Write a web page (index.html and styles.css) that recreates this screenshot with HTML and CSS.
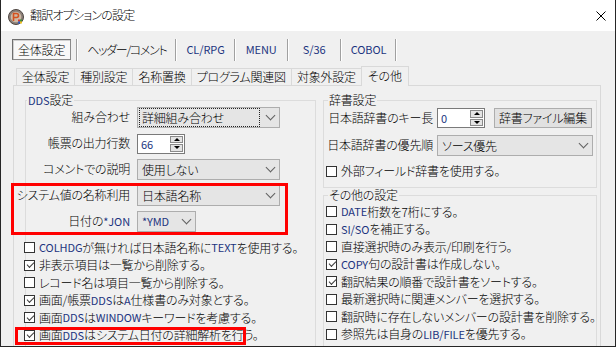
FILE: index.html
```html
<!DOCTYPE html>
<html lang="ja">
<head>
  <meta charset="UTF-8">
  <meta name="viewport" content="width=device-width, initial-scale=1.0">
  <title>翻訳オプションの設定</title>
  <link rel="stylesheet" href="styles.css">
</head>
<body>
  <div class="window">
    <div class="titlebar">
      <svg class="app-icon" viewBox="0 0 16 16">
        <circle cx="8" cy="8" r="7.5" fill="#8c8079" stroke="#4d4540"/>
        <circle cx="8" cy="8" r="5.3" fill="#cdb9a5"/>
        <path d="M5.5 12V4.5h3a2 2 0 0 1 0 4h-3" fill="none" stroke="#d4521e" stroke-width="1.6"/>
        <rect x="10" y="10.5" width="2" height="2" fill="#e0392b"/>
        <rect x="12" y="10.5" width="2" height="2" fill="#3a8f3a"/>
        <rect x="10" y="12.5" width="2" height="2" fill="#2f5fc9"/>
        <rect x="12" y="12.5" width="2" height="2" fill="#f0c020"/>
      </svg>
      <span class="title">翻訳オプションの設定</span>
      <svg class="close" viewBox="0 0 10 10">
        <path d="M0.5 0.5L9.5 9.5M9.5 0.5L0.5 9.5" stroke="#000" stroke-width="1"/>
      </svg>
    </div>

    <div class="client">
      <div class="toolbar">
        <span class="tool pressed">全体設定</span>
        <span class="sep"></span>
        <span class="tool kana">ヘッダー/コメント</span>
        <span class="sep"></span>
        <span class="tool en">CL/RPG</span>
        <span class="sep"></span>
        <span class="tool en">MENU</span>
        <span class="sep"></span>
        <span class="tool en">S/36</span>
        <span class="sep"></span>
        <span class="tool en">COBOL</span>
        <span class="sep"></span>
      </div>

      <div class="tabs">
        <span class="tab">全体設定</span>
        <span class="tab">種別設定</span>
        <span class="tab">名称置換</span>
        <span class="tab">プログラム関連図</span>
        <span class="tab">対象外設定</span>
        <span class="tab active">その他</span>
      </div>

      <div class="panel">
        <fieldset class="group dds">
          <legend><span class="en">DDS</span>設定</legend>
          <div class="stack">
            <div class="field">
              <label>組み合わせ</label>
              <div class="combo wide focus"><span class="value">詳細組み合わせ</span></div>
            </div>
            <div class="field">
              <label>帳票の出力行数</label>
              <div class="spin"><span class="value en">66</span><span class="arrows"><span class="arrow up"></span><span class="arrow down"></span></span></div>
            </div>
            <div class="field">
              <label>コメントでの説明</label>
              <div class="combo wide"><span class="value">使用しない</span></div>
            </div>
            <div class="mark">
              <div class="field">
                <label>システム値の名称利用</label>
                <div class="combo wide"><span class="value">日本語名称</span></div>
              </div>
              <div class="field">
                <label><span>日付の<span class="en">*JON</span></span></label>
                <div class="combo narrow"><span class="value en">*YMD</span></div>
              </div>
            </div>
          </div>
          <ul class="checks left">
            <li><span class="box"></span><span class="en">COLHDG</span>が無ければ日本語名称に<span class="en">TEXT</span>を使用する。</li>
            <li class="on"><span class="box"></span>非表示項目は一覧から削除する。</li>
            <li><span class="box"></span>レコード名は項目一覧から削除する。</li>
            <li class="on"><span class="box"></span>画面/帳票<span class="en">DDS</span>は<span class="en">A</span>仕様書のみ対象とする。</li>
            <li class="on"><span class="box"></span>画面<span class="en">DDS</span>は<span class="en">WINDOW</span>キーワードを考慮する。</li>
            <li class="on marked"><span class="box"></span>画面<span class="en">DDS</span>はシステム日付の詳細解析を行う。</li>
          </ul>
        </fieldset>

        <div class="side">
          <fieldset class="group dict">
            <legend>辞書設定</legend>
            <div class="field">
              <label>日本語辞書のキー長</label>
              <div class="spin"><span class="value en">0</span><span class="arrows"><span class="arrow up"></span><span class="arrow down"></span></span></div>
              <span class="button">辞書ファイル編集</span>
            </div>
            <div class="field gap">
              <label>日本語辞書の優先順</label>
              <div class="combo long"><span class="value">ソース優先</span></div>
            </div>
            <ul class="checks dict-checks">
              <li><span class="box"></span>外部フィールド辞書を使用する。</li>
            </ul>
          </fieldset>

          <fieldset class="group other">
            <legend>その他の設定</legend>
            <ul class="checks">
              <li><span class="box"></span><span class="en">DATE</span>桁数を7桁にする。</li>
              <li><span class="box"></span><span class="en">SI/SO</span>を補正する。</li>
              <li><span class="box"></span>直接選択時のみ表示/印刷を行う。</li>
              <li class="on"><span class="box"></span><span class="en">COPY</span>句の設計書は作成しない。</li>
              <li class="on"><span class="box"></span>翻訳結果の順番で設計書をソートする。</li>
              <li><span class="box"></span>最新選択時に関連メンバーを選択する。</li>
              <li><span class="box"></span>翻訳時に存在しないメンバーの設計書を削除する。</li>
              <li><span class="box"></span>参照先は自身の<span class="en">LIB/FILE</span>を優先する。</li>
            </ul>
          </fieldset>
        </div>
      </div>
    </div>
  </div>
</body>
</html>
```

FILE: styles.css
```css
* { box-sizing: border-box; }
body { margin: 0; background: #fff; color: #000; font: 300 12px/1.2 "Noto Sans CJK JP", "Noto Sans", sans-serif; font-feature-settings: "palt"; letter-spacing: -0.2px; }
.en { color: #1c3480; font-size: 11px; font-weight: 400; letter-spacing: -0.1px; }

/* window frame */
.window { width: 616px; height: 347px; border: 1px solid #262626; border-top: 0; background: #f0f0f0; overflow: hidden; display: flex; flex-direction: column; }
.titlebar { flex: none; height: 31px; background: #fff; display: flex; align-items: center; padding-left: 7px; }
.app-icon { width: 16px; height: 16px; margin-top: 2px; }
.title { margin-left: 6px; letter-spacing: -0.8px; }
.close { width: 10px; height: 10px; margin-left: auto; margin-right: 9px; }

.client { flex: 1; min-height: 0; display: flex; flex-direction: column; padding: 8px 0 0 11px; }

/* toolbar */
.toolbar { flex: none; display: flex; align-items: center; height: 21px; }
.tool { min-width: 51px; padding: 0 9px; line-height: 21px; text-align: center; white-space: nowrap; }
.tool.kana { letter-spacing: -1.3px; }
.tool.pressed { min-width: 0; padding: 0 5px; line-height: 19px; border: 1px solid; border-color: #6f6f6f #8a8a8a #8a8a8a #6f6f6f; background: #f8f8f8; box-shadow: inset 1px 1px 0 #d0d0d0; }
.tool.pressed + .sep { margin-left: 5px; }
.sep { width: 2px; height: 22px; border-left: 1px solid #a0a0a0; border-right: 1px solid #fff; }

/* tabs */
.tabs { flex: none; position: relative; z-index: 1; display: flex; align-items: flex-end; height: 20px; margin: 6px 0 0 4px; }
.tab { height: 17px; margin-bottom: 1px; padding: 0 5px; line-height: 16px; border: 1px solid #d9d9d9; border-bottom: 0; white-space: nowrap; }
.tab + .tab { margin-left: -1px; }
.tab.active { height: 20px; margin: 0 0 0 -1px; padding: 0 6px; line-height: 18px; background: #f0f0f0; }

/* tab page */
.panel { flex: 1; margin: -1px 0 0 1px; width: 588px; border: 1px solid #d9d9d9; border-bottom: 0; padding: 7px 3px 0 11px; display: grid; grid-template-columns: 291px 274px; column-gap: 7px; align-items: start; }

.group { margin: 0; padding: 0; min-width: 0; border: 1px solid #dcdcdc; }
.group legend { padding: 0 1px; margin-left: 1px; line-height: 14px; }
.side .group legend { margin-left: 4px; }

.dds { padding-bottom: 30px; }
.stack { display: flex; flex-direction: column; gap: 5px; }

.field { display: flex; align-items: center; height: 21px; }
.field label { flex: none; display: flex; justify-content: flex-end; width: 104px; margin-right: 7px; white-space: nowrap; }

.combo { display: flex; align-items: center; height: 21px; padding: 0 4px 0 1px; border: 1px solid #adadad; background: #e5e5e5; }
.combo .value { flex: 1; padding-left: 3px; line-height: 19px; white-space: nowrap; }
.combo::after { content: ""; width: 6px; height: 6px; margin: -4px 1px 0 7px; border-right: 1px solid #606060; border-bottom: 1px solid #606060; transform: rotate(45deg); }
.combo.focus .value { outline: 1px dotted #222; outline-offset: -1px; }
.combo.wide { width: 143px; }
.combo.narrow { width: 59px; }
.combo.long { width: 156px; }

.spin { display: flex; width: 48px; height: 20px; border: 1px solid #7a7a7a; background: #fff; }
.spin .value { flex: 1; padding-left: 3px; line-height: 18px; }
.arrows { display: flex; flex-direction: column; gap: 1px; width: 13px; margin: 1px 1px 1px 0; }
.arrow { flex: 1; display: flex; align-items: center; justify-content: center; border: 1px solid #8a8a8a; background: #e4e4e4; }
.arrow::after { content: ""; border-left: 3.5px solid transparent; border-right: 3.5px solid transparent; }
.arrow.up::after { border-bottom: 3.5px solid #000; }
.arrow.down::after { border-top: 3.5px solid #000; }

.button { width: 98px; height: 20px; margin-left: 9px; border: 1px solid #adadad; background: #e1e1e1; text-align: center; line-height: 18px; white-space: nowrap; }

/* checkbox lists */
.checks { list-style: none; margin: 0 0 0 2px; padding: 0; }
.checks li { display: flex; align-items: center; height: 17.5px; white-space: nowrap; }
.checks.left { margin: 7px 0 0 -2px; }
.box { position: relative; flex: none; width: 11px; height: 11px; margin-right: 4px; border: 1px solid #333; background: #fff; }
.on .box::after { content: ""; position: absolute; left: 1.5px; top: 1.5px; width: 6px; height: 3px; border-left: 1px solid #3c3c3c; border-bottom: 1px solid #3c3c3c; transform: rotate(-45deg); }

/* dictionary group */
.dict { padding: 1px 0 7px; }
.dict .field label { width: 109px; margin-right: 4px; }
.dict .field:first-of-type { height: 20px; }
.dict .gap { margin-top: 7px; }
.dict-checks { margin-top: 6px; }
.dict-checks li { height: 18px; }

.other { padding-top: 1px; padding-bottom: 20px; }

/* red annotation frames */
.mark { position: relative; display: flex; flex-direction: column; gap: 5px; }
.mark::after { content: ""; position: absolute; top: -2px; bottom: -3px; left: -15px; right: 27px; border: 3px solid #f00; }
.checks li.marked { position: relative; }
.checks li.marked::after { content: ""; position: absolute; top: 0; bottom: -1px; left: -9px; right: 69px; border: 3px solid #f00; }
```
